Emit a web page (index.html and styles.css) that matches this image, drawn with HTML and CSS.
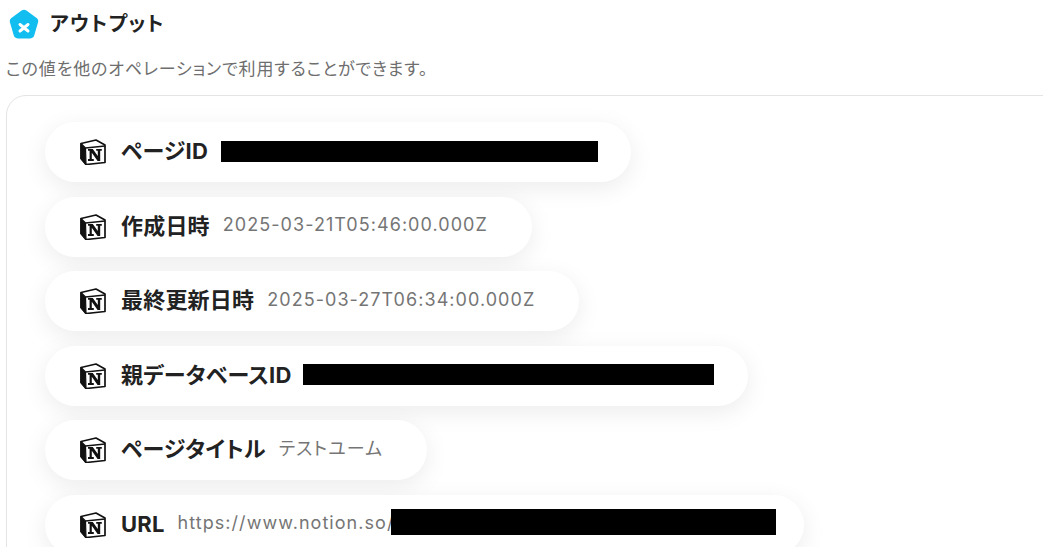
FILE: index.html
```html
<!DOCTYPE html>
<html lang="ja">
<head>
    <meta charset="UTF-8">
    <meta name="viewport" content="width=device-width, initial-scale=1.0">
    <title>アウトプット</title>
    <link rel="stylesheet" href="styles.css">
</head>
<body>
    <svg width="0" height="0" class="defs">
        <symbol id="notion" viewBox="0 0 26 26">
            <path d="M1 4.5 L16 1 L25 6 V23.5 L6 25.5 L1 19.5 Z" fill="#fff" stroke="#111" stroke-width="1.7" stroke-linejoin="round"/>
            <path d="M1 4.5 L5.5 9 L6 25.5 L1 19.5 Z" fill="#111" stroke="#111" stroke-width="1.2" stroke-linejoin="round"/>
            <path d="M5.5 9 L25 7" fill="none" stroke="#111" stroke-width="1.7"/>
            <path d="M8 10 H12.8 L17.8 17 V11.8 H16.2 V10 H21.8 V11.8 H20.2 V21.9 H17.6 L11.8 13.8 V20 H13.8 V21.9 H8 V20 H9.6 V11.8 H8 Z" fill="#111"/>
        </symbol>
    </svg>

    <div class="header">
        <svg class="logo" viewBox="0 0 32 32">
            <path d="M13.6 1.6 a4 4 0 0 1 4.8 0 L28.6 9 a4 4 0 0 1 1.4 4.4 L26.2 26.6 a4 4 0 0 1 -3.8 2.8 H9.6 a4 4 0 0 1 -3.8 -2.8 L2 13.4 A4 4 0 0 1 3.4 9 Z" fill="#12bdf0"/>
            <path d="M12 15.5 L20 22 M20 15.5 L12 22" stroke="#fff" stroke-width="3" stroke-linecap="round"/>
        </svg>
        <h1>アウトプット</h1>
    </div>
    <p class="desc">この値を他のオペレーションで利用することができます。</p>

    <div class="panel">
        <div class="pill">
            <svg class="icon"><use href="#notion"/></svg>
            <span class="name">ページID</span>
            <span class="redact id-1"></span>
        </div>
        <div class="pill">
            <svg class="icon"><use href="#notion"/></svg>
            <span class="name">作成日時</span>
            <span class="value">2025-03-21T05:46:00.000Z</span>
        </div>
        <div class="pill">
            <svg class="icon"><use href="#notion"/></svg>
            <span class="name">最終更新日時</span>
            <span class="value">2025-03-27T06:34:00.000Z</span>
        </div>
        <div class="pill">
            <svg class="icon"><use href="#notion"/></svg>
            <span class="name">親データベースID</span>
            <span class="redact id-2"></span>
        </div>
        <div class="pill">
            <svg class="icon"><use href="#notion"/></svg>
            <span class="name">ページタイトル</span>
            <span class="value">テストユーム</span>
        </div>
        <div class="pill">
            <svg class="icon"><use href="#notion"/></svg>
            <span class="name">URL</span>
            <span class="value">https://www.notion.so/</span>
            <span class="redact id-3"></span>
        </div>
    </div>
</body>
</html>
```

FILE: styles.css
```css
* {
    margin: 0;
    padding: 0;
    box-sizing: border-box;
}

html,
body {
    height: 547px;
    overflow: hidden;
}

body {
    font-family: Inter, "Noto Sans CJK JP", sans-serif;
    font-feature-settings: "palt";
    background-color: #fff;
    color: #222;
    padding-left: 6px;
}

.defs {
    position: absolute;
}

.header {
    display: flex;
    align-items: center;
    gap: 10px;
    padding: 7px 0 0 2px;
    height: 41px;
}

.logo {
    width: 32px;
    height: 32px;
    margin-top: 2px;
}

.header h1 {
    font-size: 20px;
    font-weight: 700;
    letter-spacing: 1.4px;
    line-height: 32px;
}

.desc {
    margin-top: 16px;
    font-size: 17px;
    line-height: 24px;
    color: #6e6e6e;
    letter-spacing: 0.85px;
}

.panel {
    margin-top: 14px;
    width: 1100px;
    height: 500px;
    border: 1px solid #e4e4e4;
    border-radius: 20px;
    padding: 26px 0 0 38px;
    display: flex;
    flex-direction: column;
    align-items: flex-start;
    gap: 14.5px;
}

.pill {
    display: flex;
    align-items: center;
    height: 60px;
    flex-shrink: 0;
    padding: 0 44px 0 34px;
    background-color: #fff;
    border-radius: 30px;
    box-shadow: 0 6px 24px rgba(0, 0, 0, 0.08);
}

.icon {
    width: 26px;
    height: 26px;
    margin: 0 15px 0 1px;
}

.name {
    font-size: 22px;
    font-weight: 700;
    letter-spacing: 0.2px;
    line-height: 26px;
    padding-bottom: 2px;
    margin-right: 13px;
    white-space: nowrap;
}

.value {
    font-size: 18px;
    color: #757575;
    letter-spacing: 1.05px;
    line-height: 22px;
    padding-bottom: 3px;
    white-space: nowrap;
}

.redact {
    display: block;
    height: 21px;
    margin-bottom: 2px;
    background-color: #000;
}

.id-1 {
    width: 377px;
    margin-right: -11px;
}

.id-2 {
    width: 411px;
    margin-left: -2px;
    margin-right: -10px;
}

.id-3 {
    width: 385px;
    height: 26px;
    margin-left: -3px;
    margin-bottom: 6px;
    margin-right: -16px;
}
```
